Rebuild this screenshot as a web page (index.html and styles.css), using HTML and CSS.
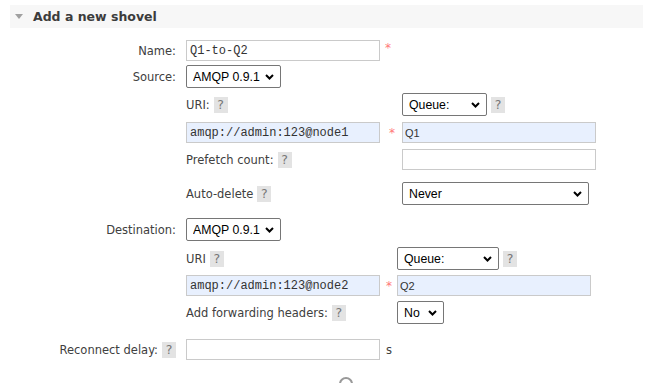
FILE: index.html
```html
<!DOCTYPE html>
<html lang="en">
<head>
    <meta charset="UTF-8">
    <title>Add a new shovel</title>
    <link rel="stylesheet" href="styles.css">
</head>
<body>

    <div class="panel">
        <!-- Section header -->
        <div class="panel-head"><span class="arrow"></span>Add a new shovel</div>

        <div class="row row-name">
            <label class="label">Name:</label>
            <div class="field">
                <input type="text" class="text" value="Q1-to-Q2"><span class="req">*</span>
            </div>
        </div>

        <div class="row row-source">
            <label class="label">Source:</label>
            <div class="field">
                <span class="select w-proto">
                    <select><option>AMQP 0.9.1</option></select>
                    <svg class="chev" width="9" height="6" viewBox="0 0 9 6"><path d="M1 1l3.5 3.5L8 1" fill="none" stroke="#000" stroke-width="2"/></svg>
                </span>
            </div>
        </div>

        <!-- Source details -->
        <div class="row row-src-block">
            <div></div>
            <div class="sub sub-src">
                <div class="cell">URI: <span class="help">?</span></div>
                <div></div>
                <div class="cell">
                    <span class="select w-queue">
                        <select><option>Queue:</option></select>
                        <svg class="chev" width="9" height="6" viewBox="0 0 9 6"><path d="M1 1l3.5 3.5L8 1" fill="none" stroke="#000" stroke-width="2"/></svg>
                    </span>
                    <span class="help">?</span>
                </div>

                <input type="text" class="text filled" value="amqp://admin:123@node1">
                <span class="req req-mid">*</span>
                <input type="text" class="text filled short" value="Q1">

                <div class="cell">Prefetch count: <span class="help">?</span></div>
                <div></div>
                <input type="text" class="text" value="">

                <div class="cell spaced">Auto-delete <span class="help">?</span></div>
                <div class="spaced"></div>
                <div class="cell spaced">
                    <span class="select w-never">
                        <select><option>Never</option></select>
                        <svg class="chev" width="9" height="6" viewBox="0 0 9 6"><path d="M1 1l3.5 3.5L8 1" fill="none" stroke="#000" stroke-width="2"/></svg>
                    </span>
                </div>
            </div>
        </div>

        <div class="row row-dest">
            <label class="label">Destination:</label>
            <div class="field">
                <span class="select w-proto">
                    <select><option>AMQP 0.9.1</option></select>
                    <svg class="chev" width="9" height="6" viewBox="0 0 9 6"><path d="M1 1l3.5 3.5L8 1" fill="none" stroke="#000" stroke-width="2"/></svg>
                </span>
            </div>
        </div>

        <!-- Destination details -->
        <div class="row row-dest-block">
            <div></div>
            <div class="sub sub-dest">
                <div class="cell">URI <span class="help">?</span></div>
                <div></div>
                <div class="cell">
                    <span class="select w-queue2">
                        <select><option>Queue:</option></select>
                        <svg class="chev" width="9" height="6" viewBox="0 0 9 6"><path d="M1 1l3.5 3.5L8 1" fill="none" stroke="#000" stroke-width="2"/></svg>
                    </span>
                    <span class="help">?</span>
                </div>

                <input type="text" class="text filled" value="amqp://admin:123@node2">
                <span class="req req-mid">*</span>
                <input type="text" class="text filled short" value="Q2">

                <div class="cell">Add forwarding headers: <span class="help">?</span></div>
                <div></div>
                <div class="cell">
                    <span class="select w-no">
                        <select><option>No</option></select>
                        <svg class="chev" width="9" height="6" viewBox="0 0 9 6"><path d="M1 1l3.5 3.5L8 1" fill="none" stroke="#000" stroke-width="2"/></svg>
                    </span>
                </div>
            </div>
        </div>

        <div class="row row-delay">
            <label class="label">Reconnect delay: <span class="help">?</span></label>
            <div class="field">
                <input type="text" class="text" value=""><span class="unit">s</span>
            </div>
        </div>

        <div class="spinner-row"><span class="spinner"></span></div>
    </div>

</body>
</html>
```

FILE: styles.css
```css
/* Reset */
* {
    box-sizing: border-box;
}

body {
    margin: 0;
    height: 383px;
    overflow: hidden;
    background: #fff;
    color: #404040;
    font-family: "DejaVu Sans", Verdana, sans-serif;
    font-size: 11.5px;
}

/* Panel */
.panel {
    margin: 5px 21px 0 10px;
}

.panel-head {
    display: flex;
    align-items: center;
    height: 23px;
    padding-left: 5px;
    background: #f7f7f7;
    color: #3c3c3c;
    font-weight: bold;
    font-size: 12.5px;
}

.arrow {
    width: 0;
    height: 0;
    margin-right: 10px;
    border-left: 4.5px solid transparent;
    border-right: 4.5px solid transparent;
    border-top: 5px solid #a0a0a0;
}

/* Form rows */
.row {
    display: grid;
    grid-template-columns: 167px auto;
    column-gap: 9px;
    align-items: center;
}

.label {
    display: flex;
    align-items: center;
    justify-content: flex-end;
    padding-right: 1px;
}

.field {
    display: flex;
    align-items: center;
}

.row-name { margin-top: 12px; }
.row-source { margin-top: 4px; }
.row-src-block { margin-top: 5px; }
.row-dest { margin-top: 13px; }
.row-dest-block { margin-top: 6px; }
.row-delay { margin-top: 15px; }

/* Nested blocks */
.sub {
    display: grid;
    row-gap: 6px;
    align-items: center;
}

.sub-src {
    grid-template-columns: 194px 22px auto;
}

.sub-dest {
    grid-template-columns: 194px 17px auto;
    grid-template-rows: 23px 21px 23px;
    row-gap: 5px;
}

.cell {
    display: flex;
    align-items: center;
}

.spaced {
    margin-top: 6px;
}

/* Inputs */
.text {
    width: 194px;
    height: 21px;
    margin: 0;
    padding: 0 3px;
    border: 1px solid #cacaca;
    background: #fff;
    color: #333;
    font-family: "Liberation Mono", "Courier New", monospace;
    font-size: 12px;
}

.text.filled {
    background: #e8f0fe;
}

.text.short {
    font-family: "Liberation Sans", Arial, sans-serif;
    font-size: 11px;
    padding-left: 2px;
}

.req {
    margin-left: 5px;
    color: #f77;
    font-size: 12px;
    align-self: flex-start;
    margin-top: 1px;
}

.req-mid {
    margin-left: 9px;
    align-self: center;
}

.sub-dest .req-mid {
    margin-left: 6px;
}

.unit {
    margin-left: 6px;
}

/* Help badge */
.help {
    display: inline-block;
    width: 14px;
    height: 16px;
    margin-left: 4px;
    background: #e3e3e3;
    color: #777;
    text-align: center;
    line-height: 16px;
    font-size: 12.5px;
}

/* Selects */
.select {
    position: relative;
    display: inline-block;
}

.select select {
    -webkit-appearance: none;
    appearance: none;
    width: 100%;
    height: 23px;
    margin: 0;
    padding: 0 0 0 6px;
    border: 1px solid #767676;
    border-radius: 2px;
    background: #fff;
    color: #000;
    font-family: "Liberation Sans", Arial, sans-serif;
    font-size: 12.3px;
}

.chev {
    position: absolute;
    right: 7px;
    top: 9px;
    pointer-events: none;
}

.w-proto { width: 95px; }
.w-queue { width: 85px; }
.w-never { width: 187px; }
.w-queue2 { width: 102px; }
.w-no { width: 47px; }

/* Loading indicator cut off at the bottom */
.spinner-row {
    margin-top: 17px;
    padding-left: 329px;
}

.spinner {
    display: block;
    width: 14px;
    height: 14px;
    border: 2px solid #999;
    border-radius: 50%;
}
```
